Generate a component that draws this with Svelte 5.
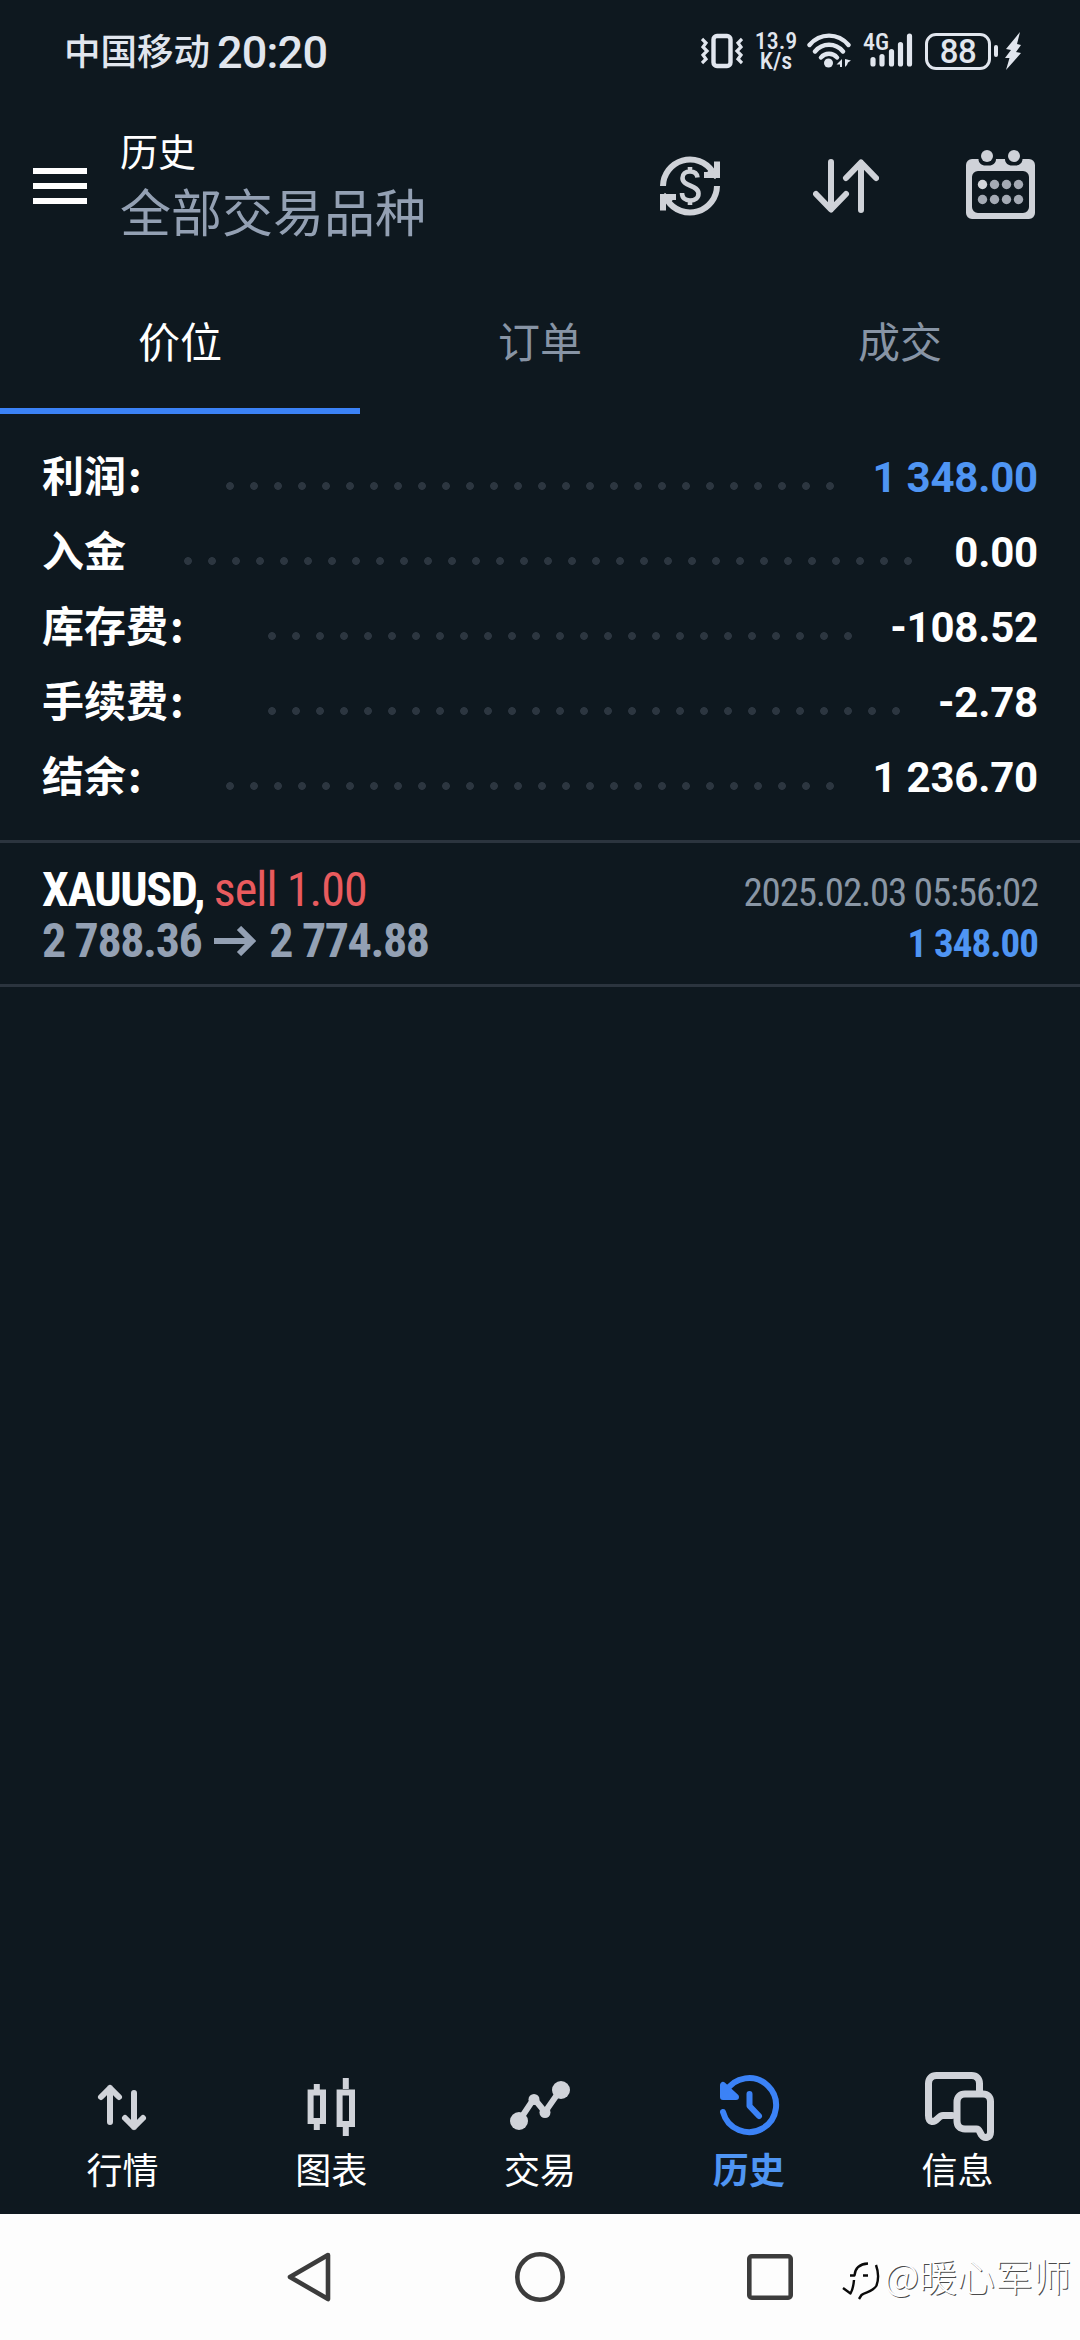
<script lang="ts">
  interface SummaryRow {
    label: string;
    value: string;
    colon?: boolean;
    positive?: boolean;
  }

  const tabs = ['价位', '订单', '成交'];
  const activeTab = 0;

  const summary: SummaryRow[] = [
    { label: '利润', colon: true, value: '1 348.00', positive: true },
    { label: '入金', value: '0.00' },
    { label: '库存费', colon: true, value: '-108.52' },
    { label: '手续费', colon: true, value: '-2.78' },
    { label: '结余', colon: true, value: '1 236.70' },
  ];

  const nav = [
    { id: 'quotes', label: '行情' },
    { id: 'charts', label: '图表' },
    { id: 'trade', label: '交易' },
    { id: 'history', label: '历史' },
    { id: 'messages', label: '信息' },
  ];
  const activeNav = 'history';
</script>

<div class="screen">
  <div class="status">
    <span class="carrier">中国移动</span>
    <span class="clock">20:20</span>
    <div class="indicators">
      <svg class="vibrate" viewBox="0 0 42 36" width="42" height="36" fill="none" stroke="#e1e6ee">
        <rect x="12.5" y="3" width="17" height="30" rx="3.5" stroke-width="4.4" />
        <path d="M1 6l4 4-3 4 4 4-4 4 3 4-4 4M41 6l-4 4 3 4-4 4 4 4-3 4 4 4" stroke-width="3.2" />
      </svg>
      <div class="speed"><span>13.9</span><span>K/s</span></div>
      <svg class="wifi" viewBox="0 0 44 36" width="44" height="36" fill="none" stroke="#e1e6ee" stroke-width="4.4" stroke-linecap="round">
        <path d="M2.500 12C13-.5 31-.5 41.500 12M8 18.500c7.500-9 20.500-9 28 0M14 24.500c4-5 12-5 16 0" />
        <circle cx="21.500" cy="30" r="4.500" fill="#e1e6ee" stroke="none" />
        <path d="M35 26v8h-2v-2.500h-3.500zM38 26v8l2-2 1-2.500 3-2z" fill="#e1e6ee" stroke="none" />
      </svg>
      <div class="cell">
        <svg viewBox="0 0 50 36" width="50" height="36" fill="none" stroke="#e1e6ee" stroke-width="5.2" stroke-linecap="round">
          <path d="M10 26.500V31M19 23.500V31M28.500 18.500V31M37.500 11.500V31M46.500 3V31" />
        </svg>
        <span>4G</span>
      </div>
      <div class="battery"><span>88</span></div>
      <i class="battery-tip"></i>
      <svg class="bolt" viewBox="0 0 18 38" width="18" height="38" fill="#e1e6ee">
        <path d="M16 0L2 17l5 1-6 8 4.500 0L2 38 17 21l-5-1 5-7-4-1z" />
      </svg>
    </div>
  </div>

  <header>
    <div class="menu"><i></i><i></i><i></i></div>
    <div class="titles">
      <h1>历史</h1>
      <p>全部交易品种</p>
    </div>
    <div class="actions">
      <svg viewBox="0 0 60 60" width="60" height="60" fill="none" stroke="#cfd2d8" stroke-width="6">
        <path d="M3 30A27 27 0 0 1 52.500 15.500M57 30A27 27 0 0 1 7.500 44.500" />
        <path d="M57 5.500V19H44M3 54.500V41H16" />
        <path d="M49 14l8 7M11 46l-8-7" />
        <path d="M37.500 21.500C37 17 33.500 15.500 30 15.500c-4.500 0-7.500 2.500-7.500 6.500 0 9 16 6.500 16 15.500 0 4.500-3.500 7-8.500 7-4.500 0-8-2.500-8-7.500M30 11v5M30 44v5" stroke-width="4.600" />
      </svg>
      <svg class="sort" viewBox="0 0 66 54" width="66" height="54" fill="none" stroke="#cfd2d8" stroke-width="6" stroke-linecap="round" stroke-linejoin="round">
        <path d="M18 3v47M3 35l15 15.500L33 35M48 51V4M33 19L48 3.500 63 19" />
      </svg>
      <svg class="calendar" viewBox="0 0 69 69" width="69" height="69">
        <path
          fill="#cfd2d8"
          fill-rule="evenodd"
          d="M6 9h6.500c0 4 3 6.500 7 6.500h3.500c4 0 7-2.500 7-6.500h9c0 4 3 6.500 7 6.500h3.500c4 0 7-2.500 7-6.500H63a6 6 0 0 1 6 6v48a6 6 0 0 1-6 6H6a6 6 0 0 1-6-6V15a6 6 0 0 1 6-6zM12 21a6 6 0 0 0-6 6v30a6 6 0 0 0 6 6h45a6 6 0 0 0 6-6V27a6 6 0 0 0-6-6z"
        />
        <circle cx="21" cy="6" r="6" fill="#cfd2d8" />
        <circle cx="48" cy="6" r="6" fill="#cfd2d8" />
        {#each [34.5, 49.5] as cy, row}
          {#each [16.5, 28.5, 40.5, 52.5] as cx, col}
            <circle {cx} {cy} r="4.700" fill={row + col === 0 ? '#d3d6da' : '#a4aab4'} />
          {/each}
        {/each}
      </svg>
    </div>
  </header>

  <div class="tabs">
    {#each tabs as tab, i}
      <div class="tab" class:active={i === activeTab}>{tab}</div>
    {/each}
  </div>

  <div class="summary">
    {#each summary as row}
      <div class="row">
        <span class="label">{row.label}</span>
        {#if row.colon}<span class="colon">:</span>{/if}
        <span class="dots"></span>
        <span class="value" class:positive={row.positive}>{row.value}</span>
      </div>
    {/each}
  </div>

  <div class="deal">
    <div class="line">
      <span class="symbol">XAUUSD, <span class="side">sell 1.00</span></span>
      <span class="time">2025.02.03 05:56:02</span>
    </div>
    <div class="line">
      <span class="prices">
        <span>2 788.36</span>
        <svg viewBox="0 0 42 30" width="42" height="30" fill="none" stroke="#93a0b3" stroke-width="6">
          <path d="M0 15H38M25 2l13 13-13 13" />
        </svg>
        <span>2 774.88</span>
      </span>
      <span class="profit">1 348.00</span>
    </div>
  </div>

  <nav>
    {#each nav as item}
      <div class="item" class:active={item.id === activeNav}>
        <svg viewBox="0 0 72 72" width="72" height="72" fill="none" stroke="currentColor" stroke-width="6" stroke-linecap="round" stroke-linejoin="round">
          {#if item.id === 'quotes'}
            <path d="M24 52V18M15 27l9-9 9 9M48 23v34M39 48l9 9 9-9" />
          {:else if item.id === 'charts'}
            <path d="M21.800 14v6M21.800 54v6M50.800 8v11M50.800 57v9" stroke-linecap="butt" />
            <path d="M15.600 22.500H28V51H15.600zM44.600 22.500H57V54H44.600z" stroke-linejoin="miter" />
          {:else if item.id === 'trade'}
            <path d="M15 51L30 28.500 41 42 57 19" />
            <circle cx="15" cy="51" r="9" fill="currentColor" stroke="none" />
            <circle cx="30" cy="29.500" r="5.500" fill="currentColor" stroke="none" />
            <circle cx="41" cy="42.500" r="5.500" fill="currentColor" stroke="none" />
            <circle cx="57" cy="20" r="9" fill="currentColor" stroke="none" />
          {:else if item.id === 'history'}
            <path d="M10 42A27 27 0 1 0 12.500 22" />
            <path d="M10 15v12h13z" fill="currentColor" />
            <path d="M36.500 24v12l9.500 10" />
          {:else}
            <path d="M30 45.500h-9c-5 0-6 7-11 6-3-.5-3.500-3-3.500-6v-32c0-5 3-8 8-8h35c5 0 8 3 8 8v10" stroke-width="7" />
            <path d="M43 24h18c4.500 0 7.500 3 7.500 7.500V62c0 6-6 7-9 3-2-3-2-6-5-6H43c-5 0-8-3-8-8V32c0-5 3-8 8-8z" stroke-width="7" />
          {/if}
        </svg>
        <span>{item.label}</span>
      </div>
    {/each}
  </nav>

  <div class="system">
    <svg viewBox="0 0 46 50" width="46" height="50"><path d="M41 3L3 25l38 22z" /></svg>
    <svg viewBox="0 0 50 50" width="50" height="50"><circle cx="25" cy="25" r="22.700" /></svg>
    <svg viewBox="0 0 46 46" width="46" height="46"><rect x="2.300" y="2.300" width="41.400" height="41.400" rx="2.500" /></svg>
    <div class="watermark">
      <svg class="mark" viewBox="0 0 40 42" width="40" height="42">
        <path d="M8 17.500h4.500C13 11 17 6 26 5.500" />
        <path d="M21 17.500h5M12 22c-.5 6-1.500 10-3.500 13.500L1 30" />
        <path d="M34 7c2.500 7 2.500 15 .5 20.500-4 7-11 6-15 9.500l-2.500 4" />
      </svg>
      <span>@暖心军师</span>
    </div>
  </div>
</div>

<style>
  :global(body) {
    background: #0e181f;
  }

  .screen {
    display: flex;
    flex-direction: column;
    width: 1080px;
    height: 2340px;
    background: #0e181f;
    color: #ffffff;
    font-family: Roboto, 'Noto Sans CJK SC', sans-serif;
    white-space: nowrap;
    overflow: hidden;
  }

  .status {
    display: flex;
    align-items: center;
    box-sizing: border-box;
    height: 102px;
    padding: 0 58px 0 64px;
    color: #e1e6ee;
  }

  .carrier {
    padding-top: 3px;
    font-size: 36.5px;
    font-weight: 500;
    line-height: 102px;
  }

  .clock {
    margin-left: 7px;
    padding-top: 3px;
    font-size: 45px;
    font-weight: 500;
    font-stretch: 88%;
    letter-spacing: -0.8px;
  }

  .indicators {
    display: flex;
    align-items: center;
    margin-left: auto;
  }

  .speed {
    display: flex;
    flex-direction: column;
    align-items: center;
    width: 44px;
    margin-left: 11px;
    font-size: 24px;
    font-stretch: 80%;
    font-weight: 500;
    line-height: 20px;
  }

  .wifi {
    margin-left: 9px;
  }

  .cell {
    position: relative;
    height: 36px;
    margin-left: 12px;
  }

  .cell span {
    position: absolute;
    top: -3px;
    left: 0;
    font-size: 24px;
    font-stretch: 75%;
    font-weight: 500;
    line-height: 24px;
  }

  .battery {
    box-sizing: border-box;
    width: 66px;
    height: 37px;
    margin-left: 12px;
    border: 3px solid #e1e6ee;
    border-radius: 11px;
    font-size: 33px;
    font-stretch: 92%;
    font-weight: 500;
    line-height: 32px;
    text-align: center;
    letter-spacing: -0.5px;
  }

  .battery-tip {
    width: 4px;
    height: 12px;
    margin-left: 3px;
    border-radius: 2px;
    background: #e1e6ee;
  }

  .bolt {
    margin-left: 6px;
  }

  header {
    display: flex;
    box-sizing: border-box;
    height: 186px;
    padding: 0 45px 0 33px;
  }

  .menu {
    display: flex;
    flex-direction: column;
    gap: 9px;
    width: 54px;
    padding-top: 66px;
  }

  .menu i {
    height: 6px;
    background: #ffffff;
  }

  .titles {
    margin-left: 33px;
    padding-top: 24px;
  }

  h1 {
    margin: 0;
    font-size: 38px;
    font-weight: 400;
    line-height: 55px;
  }

  p {
    margin: 0;
    color: #93a0b3;
    font-size: 51px;
    line-height: 67px;
  }

  .actions {
    display: flex;
    align-items: center;
    height: 168px;
    margin-left: auto;
  }

  .sort {
    margin: 0 87px 0 93px;
  }

  .calendar {
    margin-bottom: 3px;
  }

  .tabs {
    display: grid;
    grid-template-columns: repeat(3, 1fr);
    height: 126px;
  }

  .tab {
    box-sizing: border-box;
    padding-top: 3px;
    color: #8794a5;
    font-size: 42px;
    line-height: 106px;
    text-align: center;
  }

  .tab.active {
    border-bottom: 6px solid #3b82f6;
    color: #ffffff;
  }

  .summary {
    box-sizing: border-box;
    height: 426px;
    padding: 26px 42px 0;
  }

  .row {
    display: flex;
    align-items: center;
    height: 75px;
    font-size: 42px;
    font-weight: 700;
    line-height: 75px;
  }

  .colon {
    box-sizing: border-box;
    width: 42px;
    margin-top: -9px;
    padding-left: 2px;
    font-family: 'Noto Sans CJK SC', sans-serif;
  }

  .dots {
    flex: 1;
    height: 8px;
    margin: 16px 32px 0 58px;
    background: radial-gradient(circle at 4px 4px, #2c3640 3.5px, transparent 4.2px) 0 0 / 24px 8px;
  }

  .value {
    letter-spacing: -0.2px;
  }

  .positive,
  .profit {
    color: #4f95f3;
  }

  .deal {
    box-sizing: border-box;
    height: 147px;
    padding: 21px 42px 0;
    border-top: 3px solid #2b343e;
    border-bottom: 3px solid #2b343e;
    font-stretch: 75%;
  }

  .line {
    display: flex;
    justify-content: space-between;
    height: 51px;
    line-height: 51px;
  }

  .symbol,
  .prices {
    font-size: 48px;
    font-weight: 700;
    letter-spacing: -1.4px;
  }

  .side {
    color: #e95b5e;
    font-weight: 400;
    letter-spacing: -0.9px;
  }

  .prices {
    display: flex;
    align-items: center;
    gap: 13px;
    color: #93a0b3;
  }

  .time {
    padding-top: 4px;
    color: #8996a5;
    font-size: 39px;
    letter-spacing: -1.2px;
  }

  .profit {
    padding-top: 4px;
    font-size: 39px;
    font-weight: 700;
    letter-spacing: -1px;
  }

  nav {
    display: grid;
    grid-template-columns: repeat(5, 1fr);
    margin-top: auto;
    padding: 0 18px;
    height: 144px;
  }

  .item {
    display: flex;
    flex-direction: column;
    align-items: center;
    color: #d0d3d9;
  }

  .item span {
    color: #ffffff;
    font-size: 36px;
    line-height: 60px;
  }

  .item.active {
    color: #3b82f6;
  }

  .item.active span {
    color: #4f95f3;
    font-weight: 700;
  }

  .system {
    position: relative;
    display: grid;
    grid-template-columns: 46px 50px 46px;
    column-gap: 182px;
    align-items: center;
    box-sizing: border-box;
    height: 126px;
    padding-left: 287px;
    background: #fdfdfd;
  }

  .system svg {
    fill: none;
    stroke: #3c3c3c;
    stroke-width: 4.6;
    stroke-linejoin: round;
  }

  .watermark {
    position: absolute;
    right: 9px;
    top: 36px;
    display: flex;
    align-items: center;
    color: #ffffff;
    font-family: 'Noto Sans CJK SC', sans-serif;
    font-size: 38px;
    font-weight: 300;
    line-height: 44px;
    text-shadow: 1px 1px 0 #4a4a4a;
  }

  .system .mark {
    margin: 8px 2px 0 0;
    stroke: #0a0a0a;
    stroke-width: 2.4;
  }
</style>
